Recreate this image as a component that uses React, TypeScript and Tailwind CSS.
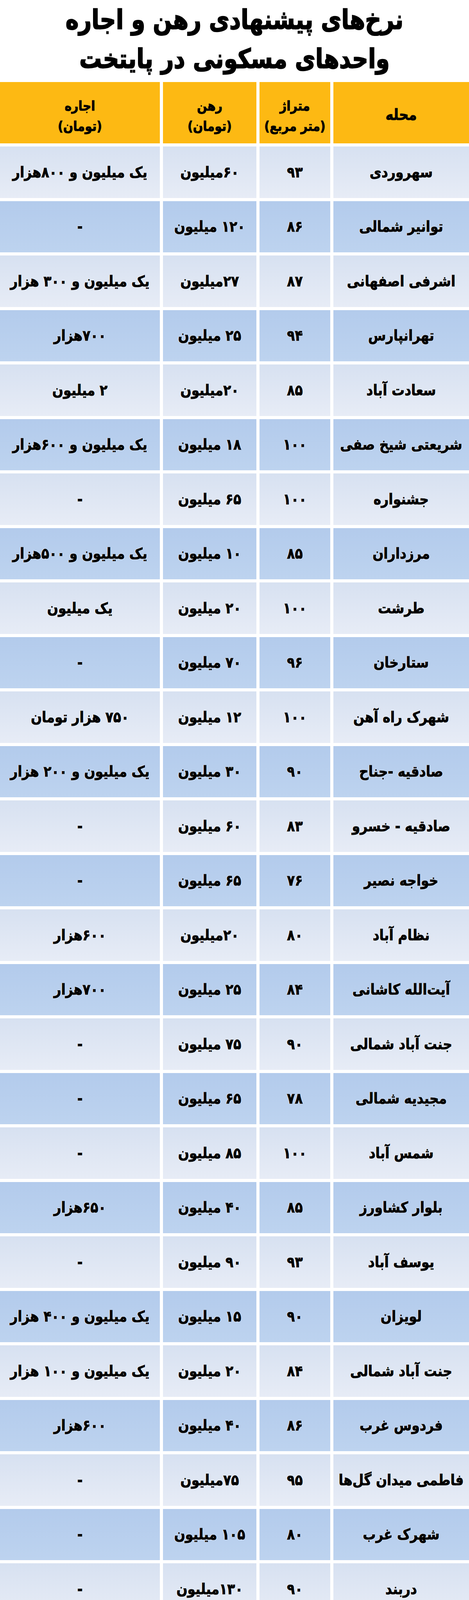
import React from "react";

type Row = [string, string, string, string];

const rows: Row[] = [
  ["سهروردی", "۹۳", "۶۰میلیون", "یک میلیون و ۸۰۰هزار"],
  ["توانیر شمالی", "۸۶", "۱۲۰ میلیون", "-"],
  ["اشرفی اصفهانی", "۸۷", "۲۷میلیون", "یک میلیون و ۳۰۰ هزار"],
  ["تهرانپارس", "۹۴", "۲۵ میلیون", "۷۰۰هزار"],
  ["سعادت آباد", "۸۵", "۲۰میلیون", "۲ میلیون"],
  ["شریعتی شیخ صفی", "۱۰۰", "۱۸ میلیون", "یک میلیون و ۶۰۰هزار"],
  ["جشنواره", "۱۰۰", "۶۵ میلیون", "-"],
  ["مرزداران", "۸۵", "۱۰ میلیون", "یک میلیون و ۵۰۰هزار"],
  ["طرشت", "۱۰۰", "۲۰ میلیون", "یک میلیون"],
  ["ستارخان", "۹۶", "۷۰ میلیون", "-"],
  ["شهرک راه آهن", "۱۰۰", "۱۲ میلیون", "۷۵۰ هزار تومان"],
  ["صادقیه -جناح", "۹۰", "۳۰ میلیون", "یک میلیون و ۲۰۰ هزار"],
  ["صادقیه - خسرو", "۸۳", "۶۰ میلیون", "-"],
  ["خواجه نصیر", "۷۶", "۶۵ میلیون", "-"],
  ["نظام آباد", "۸۰", "۲۰میلیون", "۶۰۰هزار"],
  ["آیت‌الله کاشانی", "۸۴", "۲۵ میلیون", "۷۰۰هزار"],
  ["جنت آباد شمالی", "۹۰", "۷۵ میلیون", "-"],
  ["مجیدیه شمالی", "۷۸", "۶۵ میلیون", "-"],
  ["شمس آباد", "۱۰۰", "۸۵ میلیون", "-"],
  ["بلوار کشاورز", "۸۵", "۴۰ میلیون", "۶۵۰هزار"],
  ["یوسف آباد", "۹۳", "۹۰ میلیون", "-"],
  ["لویزان", "۹۰", "۱۵ میلیون", "یک میلیون و ۴۰۰ هزار"],
  ["جنت آباد شمالی", "۸۴", "۲۰ میلیون", "یک میلیون و ۱۰۰ هزار"],
  ["فردوس غرب", "۸۶", "۴۰ میلیون", "۶۰۰هزار"],
  ["فاطمی میدان گل‌ها", "۹۵", "۷۵میلیون", "-"],
  ["شهرک غرب", "۸۰", "۱۰۵ میلیون", "-"],
  ["دربند", "۹۰", "۱۳۰میلیون", "-"],
  ["جردن", "۸۰", "۳۰میلیون", "۲ میلیون و ۶۰۰هزار"],
  ["جمالزاده شمالی", "۸۰", "۳۲ میلیون", "یک میلیون و ۲۰۰ هزار"],
  ["گیشا خ ۱۱", "۸۰", "۵۰ میلیون", "یک میلیون"],
  ["دروس", "۸۵", "۲۰ میلیون", "۳ میلیون و ۱۰۰ هزار"],
  ["شهران", "۸۳", "۵۰ میلیون", "یک میلیون و ۵۰ هزار"],
  ["پیچ شمیران", "۸۰", "۳۲میلیون", "۳۲۰ هزار"],
];

const font = "font-['DejaVu_Sans','Noto_Sans',sans-serif] font-bold";

function Cell({ text, dark }: { text: string; dark: boolean }) {
  return (
    <div
      className={
        "flex items-center justify-center text-center overflow-hidden " +
        (dark
          ? "bg-gradient-to-b from-[#b3cbec] to-[#bdd3ef]"
          : "bg-gradient-to-b from-[#d7e1f1] to-[#e7ecf6]")
      }
    >
      <span className="inline-block text-black text-[33px] leading-[40px] whitespace-nowrap [-webkit-text-stroke:1px_#000] [text-shadow:0_0_3px_#ffffff,0_0_2px_#ffffff,0_0_1px_#ffffff] scale-y-[1.15]">
        {text}
      </span>
    </div>
  );
}

export default function App() {
  return (
    <div
      dir="rtl"
      className={"w-[1200px] h-[4976px] overflow-hidden bg-white flex flex-col " + font}
    >
      <div className="h-[210px] shrink-0 flex flex-col items-center overflow-hidden">
        <div className="pt-[0px] text-center text-black text-[57px] leading-[100px] [-webkit-text-stroke:2px_#000]">
          <div className="scale-y-[1.2]">نرخ‌های پیشنهادی رهن و اجاره</div>
          <div className="scale-y-[1.2]">واحدهای مسکونی در پایتخت</div>
        </div>
      </div>

      <div className="grid shrink-0 grid-cols-[347px_181px_239px_409px] gap-x-[8px] h-[157px] text-black [-webkit-text-stroke:1px_#000]">
        <div className="bg-[#fdb913] flex items-center justify-center text-[34px] pt-[10px]">
          <span className="scale-y-[1.15]">محله</span>
        </div>
        <div className="bg-[#fdb913] flex flex-col items-center justify-center text-[30px] leading-[52px] pt-[16px]">
          <div className="scale-y-[1.15]">متراژ</div>
          <div className="scale-y-[1.15]">(متر مربع)</div>
        </div>
        <div className="bg-[#fdb913] flex flex-col items-center justify-center text-[30px] leading-[52px] pt-[16px]">
          <div className="scale-y-[1.15]">رهن</div>
          <div className="scale-y-[1.15]">(تومان)</div>
        </div>
        <div className="bg-[#fdb913] flex flex-col items-center justify-center text-[30px] leading-[52px] pt-[16px]">
          <div className="scale-y-[1.15]">اجاره</div>
          <div className="scale-y-[1.15]">(تومان)</div>
        </div>
      </div>

      <div className="flex flex-col">
        {rows.map((r, i) => {
          const dark = i % 2 === 1;
          return (
            <div
              key={i}
              className="grid shrink-0 grid-cols-[347px_181px_239px_409px] gap-x-[8px] h-[131.5px] mt-[8px]"
            >
              <Cell text={r[0]} dark={dark} />
              <Cell text={r[1]} dark={dark} />
              <Cell text={r[2]} dark={dark} />
              <Cell text={r[3]} dark={dark} />
            </div>
          );
        })}
      </div>
    </div>
  );
}
